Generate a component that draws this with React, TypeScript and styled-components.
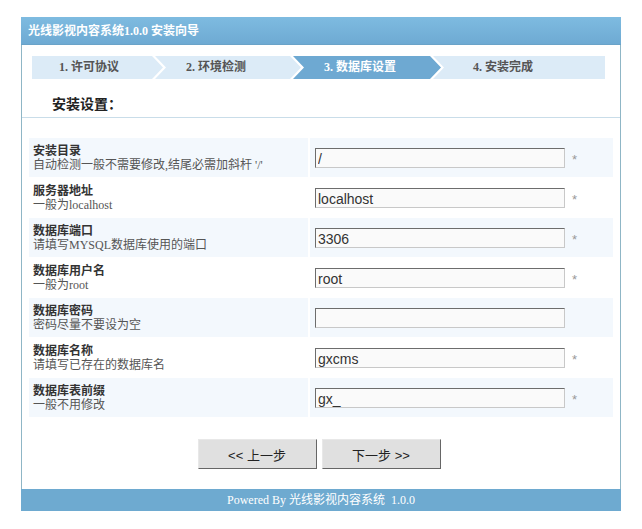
import React from 'react';
import styled, { createGlobalStyle } from 'styled-components';

interface Field {
  title: string;
  tip: string;
  value: string;
  required: boolean;
}

const steps = [
  { label: '1. 许可协议', width: 131 },
  { label: '2. 环境检测', width: 146 },
  { label: '3. 数据库设置', width: 148 },
  { label: '4. 安装完成', width: 172 },
];

const fields: Field[] = [
  { title: '安装目录', tip: "自动检测一般不需要修改,结尾必需加斜杆 '/'", value: '/', required: true },
  { title: '服务器地址', tip: '一般为localhost', value: 'localhost', required: true },
  { title: '数据库端口', tip: '请填写MYSQL数据库使用的端口', value: '3306', required: true },
  { title: '数据库用户名', tip: '一般为root', value: 'root', required: true },
  { title: '数据库密码', tip: '密码尽量不要设为空', value: '', required: false },
  { title: '数据库名称', tip: '请填写已存在的数据库名', value: 'gxcms', required: true },
  { title: '数据库表前缀', tip: '一般不用修改', value: 'gx_', required: true },
];

const GlobalStyle = createGlobalStyle`
  body {
    margin: 0;
    background: #fff;
    font-family: "Liberation Serif", "Noto Sans CJK SC", serif;
    font-size: 12px;
    color: #333;
  }
`;

const App: React.FC = () => {
  const current = 2;

  return (
    <Page>
      <GlobalStyle />
      <Panel>
        <Header>光线影视内容系统1.0.0 安装向导</Header>

        <StepBar>
          {steps.map((s, i) => (
            <Step
              key={s.label}
              $w={s.width}
              $active={i === current}
              $first={i === 0}
              $last={i === steps.length - 1}
            >
              {s.label}
            </Step>
          ))}
        </StepBar>

        <SectionTitle>安装设置：</SectionTitle>

        <FieldTable>
          {fields.map((f, i) => (
            <React.Fragment key={f.title}>
              <LabelCell $odd={i % 2 === 0}>
                <strong>{f.title}</strong>
                <span>{f.tip}</span>
              </LabelCell>
              <ValueCell $odd={i % 2 === 0}>
                <TextInput type={f.title === '数据库密码' ? 'password' : 'text'} defaultValue={f.value} />
                {f.required && <Required>*</Required>}
              </ValueCell>
            </React.Fragment>
          ))}
        </FieldTable>

        <Actions>
          <NavButton type="button">&lt;&lt; 上一步</NavButton>
          <NavButton type="button">下一步 &gt;&gt;</NavButton>
        </Actions>

        <Footer>Powered By 光线影视内容系统&nbsp;&nbsp;1.0.0</Footer>
      </Panel>
    </Page>
  );
};

const Page = styled.div`
  padding: 17px 0 0 21px;
`;

const Panel = styled.div`
  width: 600px;
  box-sizing: border-box;
  border-left: 1px solid #8fb6c6;
  border-right: 1px solid #8fb6c6;
  background: #fff;
`;

const Header = styled.div`
  height: 28px;
  line-height: 28px;
  margin: 0 -1px;
  padding-left: 7px;
  background: linear-gradient(#7ebbe0, #6eaad3);
  border-bottom: 1px solid #6aa3c8;
  box-sizing: border-box;
  color: #fff;
  font-weight: bold;
  font-size: 12px;
`;

const StepBar = styled.div`
  display: flex;
  height: 23px;
  margin: 11px 15px 0 10px;
`;

// arrow-shaped tabs; the 3px overlap gap leaves a white chevron between them
const Step = styled.div<{ $w: number; $active?: boolean; $first?: boolean; $last?: boolean }>`
  flex: none;
  width: ${(p) => p.$w}px;
  margin-left: ${(p) => (p.$first ? 0 : -8)}px;
  padding-left: ${(p) => (p.$first ? 27 : p.$last ? 40 : 31)}px;
  box-sizing: border-box;
  line-height: 23px;
  font-weight: bold;
  font-size: 12px;
  color: ${(p) => (p.$active ? '#fff' : '#555')};
  background: ${(p) => (p.$active ? '#6ea9d2' : '#dcebf7')};
  clip-path: ${(p) =>
    p.$first
      ? 'polygon(0 0, calc(100% - 11px) 0, 100% 50%, calc(100% - 11px) 100%, 0 100%)'
      : p.$last
        ? 'polygon(0 0, 100% 0, 100% 100%, 0 100%, 11px 50%)'
        : 'polygon(0 0, calc(100% - 11px) 0, 100% 50%, calc(100% - 11px) 100%, 0 100%, 11px 50%)'};
`;

const SectionTitle = styled.div`
  height: 39px;
  line-height: 52px;
  padding-left: 30px;
  box-sizing: border-box;
  font-size: 14px;
  font-weight: bold;
  color: #222;
  border-bottom: 1px solid #c9dde9;
`;

const FieldTable = styled.div`
  display: grid;
  grid-template-columns: 279px 1fr;
  grid-auto-rows: 39px;
  column-gap: 2px;
  row-gap: 1px;
  margin: 20px 7px 0;
`;

const LabelCell = styled.div<{ $odd: boolean }>`
  display: flex;
  flex-direction: column;
  justify-content: center;
  padding-left: 4px;
  background: ${(p) => (p.$odd ? '#f3f8fd' : '#fff')};
  line-height: 14px;

  strong {
    color: #333;
    font-size: 12px;
  }

  span {
    color: #555;
    font-size: 12px;
  }
`;

const ValueCell = styled.div<{ $odd: boolean }>`
  display: flex;
  align-items: center;
  padding-left: 5px;
  background: ${(p) => (p.$odd ? '#f3f8fd' : '#fff')};
`;

const TextInput = styled.input`
  width: 250px;
  height: 20px;
  box-sizing: border-box;
  padding: 2px 2px 0;
  border: 1px solid #c8c8c8;
  border-top-color: #6d6d6d;
  border-left-color: #6d6d6d;
  background: #fafafa;
  font-family: "Liberation Sans", Arial, sans-serif;
  font-size: 14px;
  color: #333;
  outline: none;
`;

const Required = styled.span`
  margin: 4px 0 0 7px;
  color: #999;
  font-family: "Liberation Sans", Arial, sans-serif;
  font-size: 13px;
`;

const Actions = styled.div`
  display: flex;
  justify-content: center;
  gap: 5px;
  margin: 22px 0 20px;
  padding-right: 4px;
`;

const NavButton = styled.button`
  width: 119px;
  height: 30px;
  box-sizing: border-box;
  background: #e0e0e0;
  border: 1px solid #e8e8e8;
  border-right-color: #666;
  border-bottom-color: #666;
  font-family: "Liberation Sans", "Noto Sans CJK SC", sans-serif;
  font-size: 13px;
  color: #222;
  cursor: pointer;
`;

const Footer = styled.div`
  height: 22px;
  line-height: 22px;
  margin: 0 -1px;
  background: #6eaad0;
  color: #fff;
  text-align: center;
  font-size: 12px;
`;

export default App;
